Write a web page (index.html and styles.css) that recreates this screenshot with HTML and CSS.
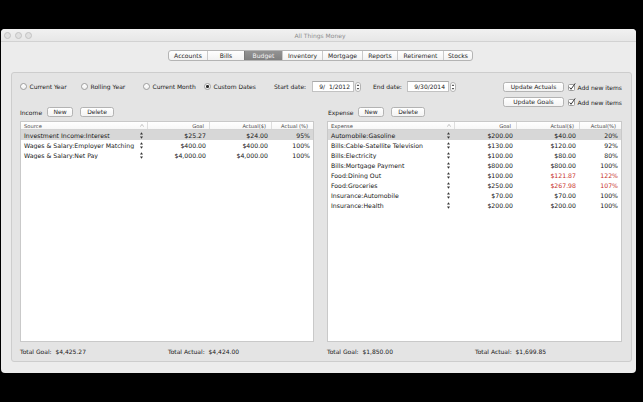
FILE: index.html
```html
<!DOCTYPE html>
<html>
<head>
<meta charset="utf-8">
<title>All Things Money</title>
<link rel="stylesheet" href="styles.css">
</head>
<body>
<div class="screen">
  <div class="window">
    <div class="titlebar">
      <div class="lights"><span class="light"></span><span class="light"></span><span class="light"></span></div>
      <div class="title">All Things Money</div>
      <div></div>
    </div>
    <div class="tabbar">
      <div class="seg">
        <span class="tab">Accounts</span>
        <span class="tab">Bills</span>
        <span class="tab on">Budget</span>
        <span class="tab">Inventory</span>
        <span class="tab">Mortgage</span>
        <span class="tab">Reports</span>
        <span class="tab">Retirement</span>
        <span class="tab">Stocks</span>
      </div>
    </div>
    <div class="panel">
      <div class="toprow">
        <div class="filters">
          <label class="opt opt-cy"><span class="radio"></span><span>Current Year</span></label>
          <label class="opt opt-ry"><span class="radio"></span><span>Rolling Year</span></label>
          <label class="opt opt-cm"><span class="radio"></span><span>Current Month</span></label>
          <label class="opt opt-cd"><span class="radio on"></span><span>Custom Dates</span></label>
          <span class="dlabel dl-start">Start date:</span>
          <span class="field">9/&nbsp; 1/2012</span>
          <svg class="stepper" width="6" height="10" viewBox="0 0 6 10"><rect x="0.5" y="0.5" width="5" height="9" rx="2.5" fill="#fff" stroke="#b3b3b3"/><path d="M1.7 4 L3 2.3 L4.3 4Z M1.7 6 L3 7.7 L4.3 6Z" fill="#444"/></svg>
          <span class="dlabel dl-end">End date:</span>
          <span class="field">9/30/2014</span>
          <svg class="stepper" width="6" height="10" viewBox="0 0 6 10"><rect x="0.5" y="0.5" width="5" height="9" rx="2.5" fill="#fff" stroke="#b3b3b3"/><path d="M1.7 4 L3 2.3 L4.3 4Z M1.7 6 L3 7.7 L4.3 6Z" fill="#444"/></svg>
        </div>
        <div class="actions">
          <div class="act">
            <button class="btn btn-wide">Update Actuals</button>
            <svg class="check" width="8" height="8" viewBox="0 0 8 8"><rect x="0.5" y="1.5" width="6" height="6" rx="1" fill="#fff" stroke="#9c9c9c"/><path d="M1.6 4.4 L3 6.3 L7.2 0.4" fill="none" stroke="#222" stroke-width="0.9"/></svg>
            <span>Add new items</span>
          </div>
          <div class="act">
            <button class="btn btn-wide">Update Goals</button>
            <svg class="check" width="8" height="8" viewBox="0 0 8 8"><rect x="0.5" y="1.5" width="6" height="6" rx="1" fill="#fff" stroke="#9c9c9c"/><path d="M1.6 4.4 L3 6.3 L7.2 0.4" fill="none" stroke="#222" stroke-width="0.9"/></svg>
            <span>Add new items</span>
          </div>
        </div>
      </div>

      <div class="columns">
        <section class="col">
          <div class="colhead">
            <span class="lbl lbl-income">Income</span>
            <button class="btn btn-new">New</button>
            <button class="btn btn-del">Delete</button>
          </div>
          <div class="table income">
            <div class="row thead">
              <div class="c name">Source<svg class="sort" width="4" height="3" viewBox="0 0 4 3"><path d="M0.3 2.7 L2 0.4 L3.7 2.7" fill="none" stroke="#a0a0a0" stroke-width="0.6"/></svg></div>
              <div class="c num">Goal</div>
              <div class="c num">Actual($)</div>
              <div class="c num">Actual (%)</div>
            </div>
            <div class="row sel">
              <div class="c name">Investment Income:Interest<svg class="pop" width="3" height="7" viewBox="0 0 3 7"><path d="M0 2.6 L1.5 0.3 L3 2.6Z M0 4.4 L1.5 6.7 L3 4.4Z" fill="#333"/></svg></div>
              <div class="c num">$25.27</div><div class="c num">$24.00</div><div class="c num">95%</div>
            </div>
            <div class="row">
              <div class="c name">Wages &amp; Salary:Employer Matching<svg class="pop" width="3" height="7" viewBox="0 0 3 7"><path d="M0 2.6 L1.5 0.3 L3 2.6Z M0 4.4 L1.5 6.7 L3 4.4Z" fill="#333"/></svg></div>
              <div class="c num">$400.00</div><div class="c num">$400.00</div><div class="c num">100%</div>
            </div>
            <div class="row">
              <div class="c name">Wages &amp; Salary:Net Pay<svg class="pop" width="3" height="7" viewBox="0 0 3 7"><path d="M0 2.6 L1.5 0.3 L3 2.6Z M0 4.4 L1.5 6.7 L3 4.4Z" fill="#333"/></svg></div>
              <div class="c num">$4,000.00</div><div class="c num">$4,000.00</div><div class="c num">100%</div>
            </div>
          </div>
          <div class="totals">
            <span>Total Goal:&nbsp; $4,425.27</span>
            <span>Total Actual:&nbsp; $4,424.00</span>
          </div>
        </section>

        <section class="col">
          <div class="colhead">
            <span class="lbl lbl-expense">Expense</span>
            <button class="btn btn-new">New</button>
            <button class="btn btn-del">Delete</button>
          </div>
          <div class="table expense">
            <div class="row thead">
              <div class="c name">Expense<svg class="sort" width="4" height="3" viewBox="0 0 4 3"><path d="M0.3 2.7 L2 0.4 L3.7 2.7" fill="none" stroke="#a0a0a0" stroke-width="0.6"/></svg></div>
              <div class="c num">Goal</div>
              <div class="c num">Actual($)</div>
              <div class="c num">Actual(%)</div>
            </div>
            <div class="row sel">
              <div class="c name">Automobile:Gasoline<svg class="pop" width="3" height="7" viewBox="0 0 3 7"><path d="M0 2.6 L1.5 0.3 L3 2.6Z M0 4.4 L1.5 6.7 L3 4.4Z" fill="#333"/></svg></div>
              <div class="c num">$200.00</div><div class="c num">$40.00</div><div class="c num">20%</div>
            </div>
            <div class="row">
              <div class="c name">Bills:Cable-Satellite Television<svg class="pop" width="3" height="7" viewBox="0 0 3 7"><path d="M0 2.6 L1.5 0.3 L3 2.6Z M0 4.4 L1.5 6.7 L3 4.4Z" fill="#333"/></svg></div>
              <div class="c num">$130.00</div><div class="c num">$120.00</div><div class="c num">92%</div>
            </div>
            <div class="row">
              <div class="c name">Bills:Electricity<svg class="pop" width="3" height="7" viewBox="0 0 3 7"><path d="M0 2.6 L1.5 0.3 L3 2.6Z M0 4.4 L1.5 6.7 L3 4.4Z" fill="#333"/></svg></div>
              <div class="c num">$100.00</div><div class="c num">$80.00</div><div class="c num">80%</div>
            </div>
            <div class="row">
              <div class="c name">Bills:Mortgage Payment<svg class="pop" width="3" height="7" viewBox="0 0 3 7"><path d="M0 2.6 L1.5 0.3 L3 2.6Z M0 4.4 L1.5 6.7 L3 4.4Z" fill="#333"/></svg></div>
              <div class="c num">$800.00</div><div class="c num">$800.00</div><div class="c num">100%</div>
            </div>
            <div class="row">
              <div class="c name">Food:Dining Out<svg class="pop" width="3" height="7" viewBox="0 0 3 7"><path d="M0 2.6 L1.5 0.3 L3 2.6Z M0 4.4 L1.5 6.7 L3 4.4Z" fill="#333"/></svg></div>
              <div class="c num">$100.00</div><div class="c num over">$121.87</div><div class="c num over">122%</div>
            </div>
            <div class="row">
              <div class="c name">Food:Groceries<svg class="pop" width="3" height="7" viewBox="0 0 3 7"><path d="M0 2.6 L1.5 0.3 L3 2.6Z M0 4.4 L1.5 6.7 L3 4.4Z" fill="#333"/></svg></div>
              <div class="c num">$250.00</div><div class="c num over">$267.98</div><div class="c num over">107%</div>
            </div>
            <div class="row">
              <div class="c name">Insurance:Automobile<svg class="pop" width="3" height="7" viewBox="0 0 3 7"><path d="M0 2.6 L1.5 0.3 L3 2.6Z M0 4.4 L1.5 6.7 L3 4.4Z" fill="#333"/></svg></div>
              <div class="c num">$70.00</div><div class="c num">$70.00</div><div class="c num">100%</div>
            </div>
            <div class="row">
              <div class="c name">Insurance:Health<svg class="pop" width="3" height="7" viewBox="0 0 3 7"><path d="M0 2.6 L1.5 0.3 L3 2.6Z M0 4.4 L1.5 6.7 L3 4.4Z" fill="#333"/></svg></div>
              <div class="c num">$200.00</div><div class="c num">$200.00</div><div class="c num">100%</div>
            </div>
          </div>
          <div class="totals">
            <span>Total Goal:&nbsp; $1,850.00</span>
            <span>Total Actual:&nbsp; $1,699.85</span>
          </div>
        </section>
      </div>
    </div>
  </div>
</div>
</body>
</html>
```

FILE: styles.css
```css
* { box-sizing: border-box; }

html, body {
  margin: 0;
  background: #000;
}

body {
  font-family: "DejaVu Sans", "Liberation Sans", sans-serif;
  font-size: 6px;
  color: #1a1a1a;
}

.screen {
  width: 643px;
  height: 402px;
  overflow: hidden;
}

.window {
  margin: 29px 0 0 1px;
  width: 635px;
  height: 344px;
  background: #ececec;
  border-radius: 4px;
  display: flex;
  flex-direction: column;
}

/* title bar */
.titlebar {
  height: 13px;
  display: grid;
  grid-template-columns: 1fr auto 1fr;
  align-items: center;
  background: linear-gradient(#f1f1f1, #e7e7e7);
  border-bottom: 1px solid #d2d2d2;
  border-radius: 4px 4px 0 0;
}

.lights {
  display: flex;
  gap: 3.5px;
  padding-left: 3px;
}

.light {
  width: 7px;
  height: 7px;
  border-radius: 50%;
  background: #e0e0e0;
  border: 1px solid #c3c3c3;
}

.title {
  color: #8d8d8d;
  font-size: 6px;
  padding-left: 3px;
}

/* segmented control */
.tabbar {
  display: flex;
  justify-content: center;
  padding: 8px 0 0 4px;
}

.seg {
  display: flex;
  height: 11px;
  border: 1px solid #b4b4b4;
  border-radius: 3px;
  background: linear-gradient(#ffffff, #f2f2f2);
  overflow: hidden;
}

.tab {
  display: flex;
  align-items: center;
  justify-content: center;
  border-left: 1px solid #cacaca;
  color: #262626;
  font-size: 6.1px;
}

.tab:first-child { border-left: 0; width: 38px; }
.tab:nth-child(2) { width: 37px; }
.tab:nth-child(3) { width: 38px; }
.tab:nth-child(4) { width: 40px; }
.tab:nth-child(5) { width: 40px; }
.tab:nth-child(6) { width: 35px; }
.tab:nth-child(7) { width: 46px; }
.tab:nth-child(8) { width: 29px; }

.tab.on {
  background: linear-gradient(#939393, #808080);
  color: #f5f5f5;
  border-left-color: #7a7a7a;
}

/* group panel */
.panel {
  margin: 11px 0 0 10px;
  width: 621px;
  height: 290px;
  border: 1px solid #cdcdcd;
  border-radius: 3px;
  background: #e4e4e4;
  padding: 8px 9px 0 8px;
  display: flex;
  flex-direction: column;
}

.toprow {
  display: flex;
  justify-content: space-between;
  align-items: flex-start;
}

.filters {
  display: flex;
  align-items: center;
  height: 11px;
}

.opt {
  display: flex;
  align-items: center;
  gap: 2.5px;
}

.opt-cy { width: 61px; }
.opt-ry { width: 62px; }
.opt-cm { width: 61px; }
.opt-cd { width: 70px; }

.radio {
  width: 7px;
  height: 7px;
  border-radius: 50%;
  border: 1px solid #9e9e9e;
  background: linear-gradient(#ffffff, #f0f0f0);
  display: flex;
  align-items: center;
  justify-content: center;
}

.radio.on::after {
  content: "";
  width: 2.5px;
  height: 2.5px;
  border-radius: 50%;
  background: #2a2a2a;
}

.dlabel { display: block; }
.dl-start { width: 38px; }
.dl-end { width: 34px; margin-left: 12px; }

.field {
  width: 42px;
  height: 11px;
  display: flex;
  align-items: center;
  justify-content: flex-end;
  padding-right: 3px;
  background: #fff;
  border: 1px solid #c2c2c2;
  border-top-color: #a9a9a9;
  white-space: nowrap;
}

.stepper {
  display: block;
  margin-left: 1px;
}

.actions {
  display: flex;
  flex-direction: column;
  gap: 5px;
  padding-top: 1px;
}

.act {
  display: flex;
  align-items: center;
  height: 10px;
}

.check {
  display: block;
  margin: 0 1.5px 0 4px;
}

.btn {
  font-family: inherit;
  font-size: 6px;
  color: #1f1f1f;
  height: 10px;
  padding: 0;
  margin: 0;
  border: 1px solid #b3b3b3;
  border-radius: 2.5px;
  background: linear-gradient(#ffffff, #f3f3f3);
  line-height: 8px;
}

.btn-wide { width: 61px; }
.btn-new { width: 26px; }
.btn-del { width: 34px; margin-left: 7px; }

/* columns */
.columns {
  display: grid;
  grid-template-columns: 294px 295px;
  column-gap: 13px;
}

.colhead {
  display: flex;
  align-items: center;
  height: 10px;
  margin-bottom: 4px;
}

.lbl-income { width: 27px; }
.lbl-expense { width: 31px; padding-left: 1px; }

.table {
  height: 221px;
  background: #fff;
  border: 1px solid #c9c9c9;
  font-size: 6.2px;
  color: #151515;
}

.row {
  display: grid;
  height: 10px;
  align-items: center;
  white-space: nowrap;
}

.income .row { grid-template-columns: 1fr 62px 62px 42px; }
.expense .row { grid-template-columns: 1fr 62px 63px 42px; }

.row.sel { background: #d7d7d7; }

.c {
  overflow: hidden;
}

.name {
  display: flex;
  align-items: center;
  justify-content: space-between;
  padding: 0 4px 0 3px;
}

.num {
  text-align: right;
  padding-right: 3px;
}

.over { color: #c8312b; }

.pop { display: block; flex: none; }

.thead {
  height: 8px;
  font-size: 5.2px;
  color: #4a4a4a;
  border-bottom: 1px solid #d3d3d3;
  background: linear-gradient(#ffffff, #f7f7f7);
}

.thead .c {
  height: 100%;
  display: flex;
  align-items: center;
  border-left: 1px solid #dedede;
}

.thead .c:first-child { border-left: 0; padding-right: 3px; }
.thead .num { justify-content: flex-end; padding-right: 5px; }

.sort { display: block; flex: none; }

.totals {
  display: grid;
  grid-template-columns: 148px auto;
  height: 18px;
  align-items: center;
  white-space: nowrap;
}
```
